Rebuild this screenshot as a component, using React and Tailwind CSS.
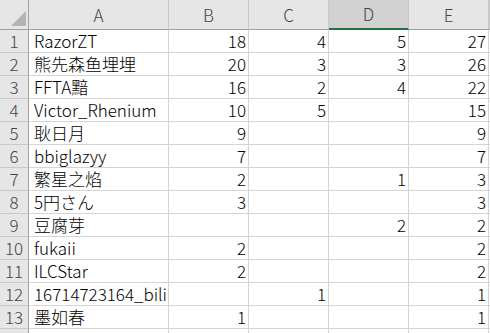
const rows = [
  ["RazorZT", 18, 4, 5, 27],
  ["熊先森鱼埋埋", 20, 3, 3, 26],
  ["FFTA黯", 16, 2, 4, 22],
  ["Victor_Rhenium", 10, 5, "", 15],
  ["耿日月", 9, "", "", 9],
  ["bbiglazyy", 7, "", "", 7],
  ["繁星之焰", 2, "", 1, 3],
  ["5円さん", 3, "", "", 3],
  ["豆腐芽", "", "", 2, 2],
  ["fukaii", 2, "", "", 2],
  ["ILCStar", 2, "", "", 2],
  ["16714723164_bili", "", 1, "", 1],
  ["墨如春", 1, "", "", 1],
  ["", "", "", "", ""],
];

const font = { fontFamily: '"Noto Sans CJK SC", "Noto Sans", sans-serif' };

export default function App() {
  return (
    <div className="w-[490px] h-[333px] overflow-hidden bg-white text-[17px] font-light text-black" style={font}>
      <div className="grid grid-cols-[29px_140px_80px_80px_80px_80px_1fr]">
        {/* header row */}
        <div className="relative h-[30px] bg-[#e6e6e6] border-r border-b border-[#a0a0a0]">
          <div className="absolute left-[11px] top-[11px] w-0 h-0 border-l-[15px] border-l-transparent border-b-[15px] border-b-[#b4b4b4]" />
        </div>
        {["A", "B", "C", "D", "E", ""].map((c, i) => (
          <div
            key={i}
            className={
              "h-[30px] flex items-center justify-center text-[#444] border-r border-[#c8c8c8] " +
              (c === "D"
                ? "bg-[#d2d2d2] border-b-2 border-b-[#217346]"
                : "bg-[#e6e6e6] border-b border-b-[#a0a0a0]")
            }
          >
            {c}
          </div>
        ))}
        {rows.map((r, ri) => (
          <Row key={ri} idx={ri < 13 ? ri + 1 : ""} r={r} />
        ))}
      </div>
    </div>
  );
}

function Row({ idx, r }) {
  return (
    <>
      <div className="h-[23px] bg-[#e6e6e6] border-r border-r-[#a0a0a0] border-b border-b-[#c8c8c8] flex items-end justify-center text-[#444] leading-[22px]">
        {idx}
      </div>
      <div className="h-[23px] border-r border-b border-[#d4d4d4] flex items-end pl-[5px] leading-[22px] whitespace-nowrap">
        {r[0]}
      </div>
      {r.slice(1).map((v, i) => (
        <div key={i} className="h-[23px] border-r border-b border-[#d4d4d4] flex items-end justify-end pr-[2px] leading-[22px]">
          {v}
        </div>
      ))}
      <div className="h-[23px] border-b border-[#d4d4d4]" />
    </>
  );
}
